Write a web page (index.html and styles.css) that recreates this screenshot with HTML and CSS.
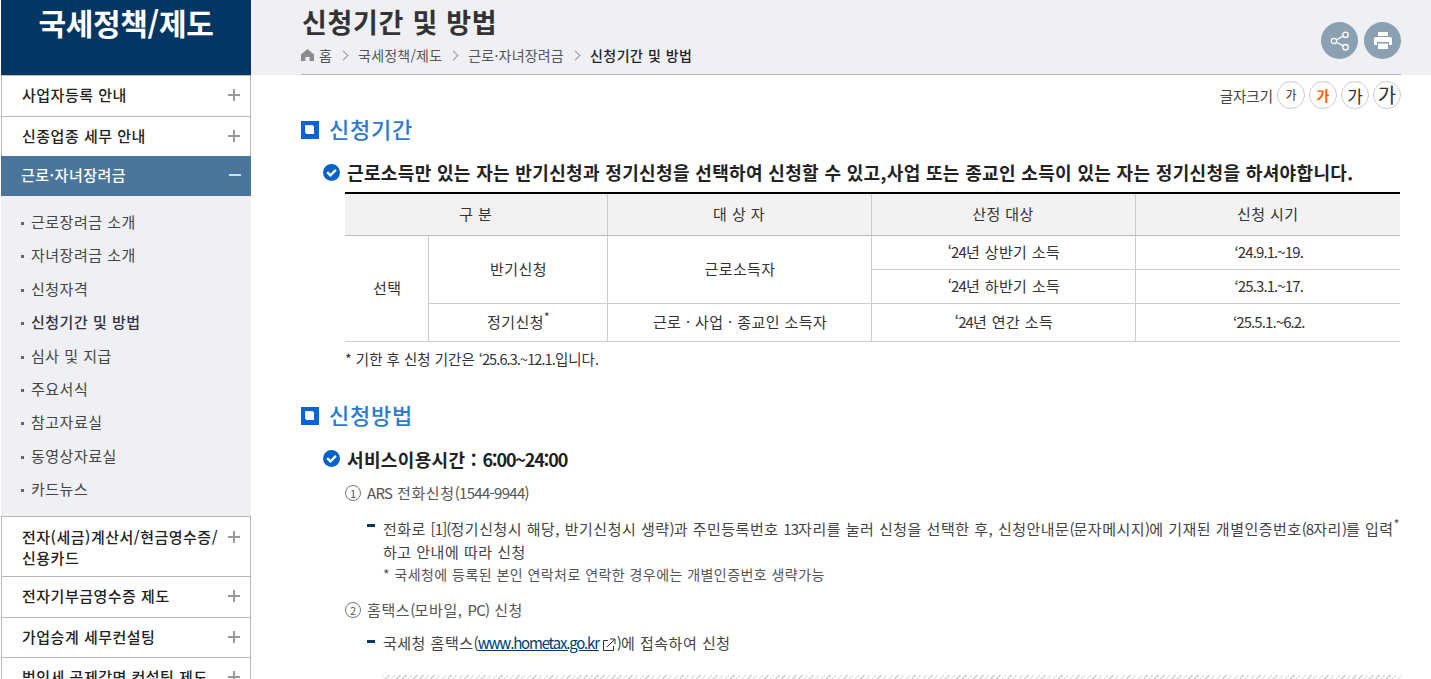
FILE: index.html
```html
<!DOCTYPE html>
<html lang="ko">
<head>
<meta charset="utf-8">
<title>신청기간 및 방법</title>
<link rel="stylesheet" href="styles.css">
</head>
<body>
<div class="app">
  <aside class="side">
    <div class="side-title">국세정책/제도</div>
    <ul class="menu">
      <li class="mi h41">사업자등록 안내<span class="pm"></span></li>
      <li class="mi h40">신종업종 세무 안내<span class="pm"></span></li>
      <li class="mi active">근로·자녀장려금<span class="pm minus"></span></li>
      <li class="sub">
        <a>근로장려금 소개</a>
        <a>자녀장려금 소개</a>
        <a>신청자격</a>
        <a class="cur">신청기간 및 방법</a>
        <a>심사 및 지급</a>
        <a>주요서식</a>
        <a>참고자료실</a>
        <a>동영상자료실</a>
        <a>카드뉴스</a>
      </li>
      <li class="mi two">전자(세금)계산서/현금영수증/<br>신용카드<span class="pm"></span></li>
      <li class="mi h41">전자기부금영수증 제도<span class="pm"></span></li>
      <li class="mi h40">가업승계 세무컨설팅<span class="pm"></span></li>
      <li class="mi h41">법인세 공제감면 컨설팅 제도<span class="pm"></span></li>
    </ul>
  </aside>
  <main class="main">
    <header class="head">
      <div class="head-in">
        <div>
          <h1 class="pt">신청기간 및 방법</h1>
          <nav class="crumb">
            <svg class="home" viewBox="0 0 13 12" width="13" height="12"><path d="M6.5 0 13 5.6V12H8.6V8H4.4V12H0V5.6Z" fill="#8c8c8c"/></svg>
            <span>홈</span><i class="gt"></i><span>국세정책/제도</span><i class="gt"></i><span>근로·자녀장려금</span><i class="gt"></i><b>신청기간 및 방법</b>
          </nav>
        </div>
        <div class="tools">
          <span class="round"><svg viewBox="0 0 20 20" width="20" height="20" fill="none" stroke="#fff" stroke-width="1.3"><circle cx="15.5" cy="3.8" r="2.7"/><circle cx="4" cy="10" r="2.7"/><circle cx="15.5" cy="16.2" r="2.7"/><path d="M6.4 8.7 13.1 5.1M6.4 11.3 13.1 14.9"/></svg></span>
          <span class="round"><svg viewBox="0 0 18 17" width="18" height="17" fill="#fff"><path d="M4 0h10v4H4z"/><path d="M2 5h14a2 2 0 0 1 2 2v6h-3v-3H3v3H0V7a2 2 0 0 1 2-2z"/><path d="M4 11.5h10V17H4z"/></svg></span>
        </div>
      </div>
    </header>
    <section class="body">
      <div class="fs">
        <span class="fs-l">글자크기</span>
        <span class="fb f1">가</span><span class="fb f2">가</span><span class="fb f3">가</span><span class="fb f4">가</span>
      </div>
      <h2 class="h2 first"><i class="sq"></i>신청기간</h2>
      <h3 class="h3"><svg class="chk" viewBox="0 0 17 17" width="17" height="17"><circle cx="8.5" cy="8.5" r="8.5" fill="#0a62c9"/><path d="M4.2 8.2 7.4 11.4 12.9 5.9" fill="none" stroke="#fff" stroke-width="2.4"/></svg>근로소득만 있는 자는 반기신청과 정기신청을 선택하여 신청할 수 있고,사업 또는 종교인 소득이 있는 자는 정기신청을 하셔야합니다.</h3>
      <table class="tb">
        <colgroup><col class="c1"><col class="c2"><col class="c3"><col class="c4"><col class="c5"></colgroup>
        <thead><tr><th colspan="2">구 분</th><th>대 상 자</th><th>산정 대상</th><th>신청 시기</th></tr></thead>
        <tbody>
          <tr class="r34"><td rowspan="3">선택</td><td rowspan="2">반기신청</td><td rowspan="2">근로소득자</td><td><span class="l">‘24</span>년 상반기 소득</td><td class="l">‘24.9.1.~19.</td></tr>
          <tr class="r34"><td><span class="l">‘24</span>년 하반기 소득</td><td class="l">‘25.3.1.~17.</td></tr>
          <tr class="r38"><td>정기신청<sup>*</sup></td><td>근로 · 사업 · 종교인 소득자</td><td><span class="l">‘24</span>년 연간 소득</td><td class="l">‘25.5.1.~6.2.</td></tr>
        </tbody>
      </table>
      <p class="note">* 기한 후 신청 기간은 <span class="l">‘25.6.3.~12.1.</span>입니다.</p>
      <h2 class="h2 second"><i class="sq"></i>신청방법</h2>
      <h3 class="h3 svc"><svg class="chk" viewBox="0 0 17 17" width="17" height="17"><circle cx="8.5" cy="8.5" r="8.5" fill="#0a62c9"/><path d="M4.2 8.2 7.4 11.4 12.9 5.9" fill="none" stroke="#fff" stroke-width="2.4"/></svg><span>서비스이용시간 : <span class="tm">6:00~24:00</span></span></h3>
      <p class="num"><i class="circ">1</i><span><span class="l">ARS</span> 전화신청<span class="l">(1544-9944)</span></span></p>
      <div class="dash">전화로 <span class="l">[1](</span>정기신청시 해당, 반기신청시 생략<span class="l">)</span>과 주민등록번호 <span class="l">13</span>자리를 눌러 신청을 선택한 후, 신청안내문<span class="l">(</span>문자메시지<span class="l">)</span>에 기재된 개별인증번호<span class="l">(8</span>자리<span class="l">)</span>를 입력<sup>*</sup><br>하고 안내에 따라 신청</div>
      <p class="small">* 국세청에 등록된 본인 연락처로 연락한 경우에는 개별인증번호 생략가능</p>
      <p class="num n2"><i class="circ">2</i><span>홈택스<span class="l">(</span>모바일, <span class="l">PC)</span> 신청</span></p>
      <div class="dash d2">국세청 홈택스<span class="l">(</span><a class="lnk">www.hometax.go.kr</a><svg class="ext" viewBox="0 0 13 13" width="13" height="13" fill="none" stroke="#333"><path d="M5 2.5H.5v10h10V8"/><path d="M4 9 11.5 1.5M7 1h5v5"/></svg><span class="l">)</span>에 접속하여 신청</div>
      <div class="hatch"></div>
    </section>
  </main>
</div>
</body>
</html>
```
FILE: styles.css
```css
* { box-sizing: border-box; }
html, body { margin: 0; height: 679px; overflow: hidden; background: #fff; }
body { font-family: "Noto Sans CJK KR", "Noto Sans", sans-serif; color: #333; font-size: 15px; letter-spacing: 0.4px; }
ul { list-style: none; margin: 0; padding: 0; }
h1, h2, h3, p { margin: 0; }
.app { display: flex; align-items: flex-start; }
.l { letter-spacing: -0.9px; }

.side { width: 250px; margin-left: 1px; flex: none; }
.side-title { height: 75px; background: #033662; color: #fff; font-size: 30px; font-weight: 700; line-height: 44px; text-align: center; letter-spacing: -0.3px; }
.mi { position: relative; border: 1px solid #b9b9b9; border-bottom: 0; padding: 0 20px 0 20px; font-size: 15px; font-weight: 500; color: #222; line-height: 38px; letter-spacing: 0.5px; white-space: nowrap; }
.h41 { height: 41px; }
.h40 { height: 40px; }
.two { height: 60px; line-height: 21px; padding-top: 9px; }
.active { height: 40px; border: 0; background: #4a769c; color: #fff; line-height: 38px; padding-left: 20px; }
.pm { position: absolute; right: 10px; top: 13px; width: 12px; height: 12px; background: linear-gradient(#999, #999) center / 12px 2px no-repeat, linear-gradient(#999, #999) center / 2px 12px no-repeat; }
.minus { right: 10px; top: 13px; background: linear-gradient(#d5dde6, #d5dde6) center / 12px 2px no-repeat; }
.two .pm { top: 14px; }
.sub { background: #eff0f4; height: 320px; padding-top: 9px; }
.sub a { display: block; position: relative; height: 33.4px; line-height: 33.4px; padding-left: 30px; font-size: 15px; color: #444; letter-spacing: 0.5px; }
.sub a::before { content: ""; position: absolute; left: 20px; top: 17px; width: 3px; height: 3px; background: #666; }
.sub .cur { color: #334; font-weight: 500; }

.main { flex: 1; min-width: 0; }
.head { height: 75px; background: #eff0f4; padding: 0 30px 0 50px; }
.head-in { height: 75px; border-bottom: 1px solid #b4b6c2; display: flex; justify-content: space-between; }
.pt { font-size: 27px; font-weight: 700; line-height: 44px; color: #333; letter-spacing: 0.7px; padding-left: 1px; }
.crumb { display: flex; align-items: center; height: 22px; font-size: 14px; color: #555; letter-spacing: 0.2px; }
.crumb b { color: #222; font-weight: 500; letter-spacing: 0.5px; }
.home { margin-right: 5px; }
.gt { width: 7px; height: 7px; border-top: 1px solid #999; border-right: 1px solid #999; transform: rotate(45deg); margin: 0 11px 0 8px; }
.tools { display: flex; gap: 6px; padding-top: 22px; }
.round { width: 37px; height: 37px; border-radius: 50%; background: #8ba0b1; display: flex; align-items: center; justify-content: center; }

.body { padding: 6px 30px 0 50px; }
.fs { display: flex; justify-content: flex-end; align-items: center; gap: 4px; height: 28px; }
.fs-l { font-size: 14.5px; color: #444; margin-right: 0; letter-spacing: 0; }
.fb { width: 28px; height: 28px; border: 1px solid #ccc; border-radius: 50%; display: flex; align-items: center; justify-content: center; color: #333; line-height: 1; letter-spacing: 0; }
.f1 { font-size: 12px; }
.f2 { font-size: 14px; color: #f60; font-weight: 700; }
.f3 { font-size: 17px; }
.f4 { font-size: 20px; }

.h2 { display: flex; align-items: center; font-size: 22px; font-weight: 500; color: #2b7bd4; line-height: 32px; letter-spacing: 0.8px; }
.first { margin-top: 3px; }
.second { margin-top: 28px; }
.sq { width: 18px; height: 18px; background: #0a62d6; margin: 4px 10px 0 0; display: flex; flex: none; position: relative; }
.sq::after { content: ""; position: absolute; left: 5px; top: 5px; width: 8px; height: 8px; background: #fff; box-shadow: -1px -1px 0 #e3effb; }
.h3 { font-size: 18px; font-weight: 700; color: #222; line-height: 28px; display: flex; align-items: center; padding-left: 22px; letter-spacing: 0.35px; white-space: nowrap; margin-top: 14px; }
.chk { margin-right: 7px; flex: none; }
.tm { letter-spacing: -1.2px; }

.tb { width: 1055px; margin: 6px 0 0 44px; border-collapse: collapse; table-layout: fixed; border-top: 2px solid #000; font-size: 15px; color: #333; }
.c1 { width: 83px; } .c2 { width: 179px; } .c3 { width: 264px; } .c4 { width: 264px; } .c5 { width: 265px; }
.tb th { height: 42px; background: #f2f2f2; font-weight: 400; border-bottom: 1px solid #bbb; border-left: 1px solid #ccc; padding: 0 0 2px; }
.tb td { text-align: center; border-bottom: 1px solid #ccc; border-left: 1px solid #ccc; padding: 0 0 2px 2px; }
.tb th:first-child, .tb tbody tr:first-child td:first-child { border-left: 0; }
.r34 td { height: 34px; }
.r38 td { height: 38px; }
.tb sup { font-size: 12px; line-height: 0; }

.note { margin: 6px 0 0 44px; font-size: 14.5px; line-height: 22px; color: #333; letter-spacing: 0; }
.svc { margin-top: 15px; }
.num { display: flex; align-items: center; margin: 8px 0 0 44px; line-height: 24px; color: #555; letter-spacing: 0.6px; }
.num .l { letter-spacing: -0.7px; }
.circ { width: 16px; height: 16px; border: 1px solid #777; border-radius: 50%; font-style: normal; font-size: 11px; line-height: 14px; text-align: center; margin-right: 6px; flex: none; letter-spacing: 0; }
.n2 { margin-top: 14px; }
.dash { position: relative; margin: 12px 0 0 82px; line-height: 23px; color: #444; white-space: nowrap; letter-spacing: 0.5px; }
.dash::before { content: ""; position: absolute; left: -16px; top: 7px; width: 8px; height: 3px; background: #033662; }
.dash sup { font-size: 12px; line-height: 0; }
.d2 { margin-top: 9px; }
.d2::before { top: 9px; }
.small { margin: 1px 0 0 82px; font-size: 14px; line-height: 20px; color: #555; letter-spacing: 0.45px; }
.lnk { color: #003a70; text-decoration: underline; letter-spacing: -1.2px; }
.ext { margin: 0 1px 0 4px; vertical-align: -2px; }
.hatch { margin: 21px 0 0 82px; height: 6px; background: repeating-linear-gradient(135deg, #d0d0d0 0 1px, #fff 1px 4px); }
```
